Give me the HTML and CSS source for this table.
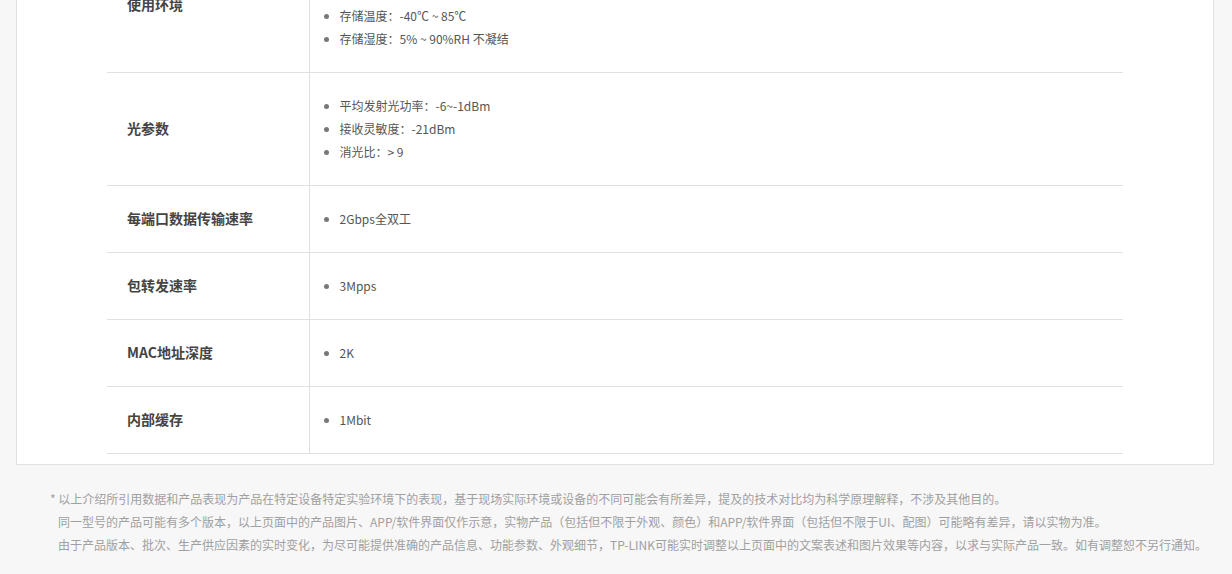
FILE: index.html
```html
<!DOCTYPE html>
<html lang="zh">
<head>
  <meta charset="UTF-8" />
  <title>产品规格参数</title>
  <link rel="stylesheet" href="styles.css">
</head>
<body>
  <div class="spec-card">
    <table class="spec-table">
      <tr>
        <td class="spec-name">使用环境</td>
        <td class="spec-value">
          <ul>
            <li>工作温度：0℃ ~ 40℃</li>
            <li>工作湿度：10% ~ 90%RH 不凝结</li>
            <li>存储温度：-40℃ ~ 85℃</li>
            <li>存储湿度：5% ~ 90%RH 不凝结</li>
          </ul>
        </td>
      </tr>
      <tr>
        <td class="spec-name">光参数</td>
        <td class="spec-value">
          <ul>
            <li>平均发射光功率：-6~-1dBm</li>
            <li>接收灵敏度：-21dBm</li>
            <li>消光比：&gt; 9</li>
          </ul>
        </td>
      </tr>
      <tr>
        <td class="spec-name">每端口数据传输速率</td>
        <td class="spec-value"><ul><li>2Gbps全双工</li></ul></td>
      </tr>
      <tr>
        <td class="spec-name">包转发速率</td>
        <td class="spec-value"><ul><li>3Mpps</li></ul></td>
      </tr>
      <tr>
        <td class="spec-name">MAC地址深度</td>
        <td class="spec-value"><ul><li>2K</li></ul></td>
      </tr>
      <tr>
        <td class="spec-name">内部缓存</td>
        <td class="spec-value"><ul><li>1Mbit</li></ul></td>
      </tr>
    </table>
  </div>

  <div class="notes">
    <p class="first">* 以上介绍所引用数据和产品表现为产品在特定设备特定实验环境下的表现，基于现场实际环境或设备的不同可能会有所差异，提及的技术对比均为科学原理解释，不涉及其他目的。</p>
    <p>同一型号的产品可能有多个版本，以上页面中的产品图片、APP/软件界面仅作示意，实物产品（包括但不限于外观、颜色）和APP/软件界面（包括但不限于UI、配图）可能略有差异，请以实物为准。</p>
    <p>由于产品版本、批次、生产供应因素的实时变化，为尽可能提供准确的产品信息、功能参数、外观细节，TP-LINK可能实时调整以上页面中的文案表述和图片效果等内容，以求与实际产品一致。如有调整恕不另行通知。</p>
  </div>
</body>
</html>
```

FILE: styles.css
```css
/* 重置默认边距 */
* {
  margin: 0;
  padding: 0;
  box-sizing: border-box;
}

body {
  font-family: "Microsoft YaHei", "Noto Sans CJK SC", sans-serif;
  background-color: #f7f7f7;
  color: #333;
}

/* 规格卡片，顶部已滚出视口 */
.spec-card {
  width: 1198px;
  margin: -65px 0 0 16px;
  padding-bottom: 10px;
  background-color: #fff;
  border: 1px solid #e1e1e1;
}

.spec-table {
  width: 1016px;
  margin: 0 auto;
  border-collapse: collapse;
}

.spec-table td {
  border-top: 1px solid #e0e0e0;
  border-bottom: 1px solid #e0e0e0;
  vertical-align: middle;
}

.spec-name {
  width: 202px;
  padding: 0 20px 2px;
  border-right: 1px solid #e0e0e0;
  font-size: 14px;
  font-weight: bold;
  color: #444;
}

.spec-value {
  padding: 21px 20px 22px 30px;
  font-size: 12px;
  line-height: 23px;
  color: #555;
}

.spec-value ul {
  list-style: disc;
}

.spec-value li::marker {
  color: #777;
}

/* 底部说明 */
.notes {
  margin-top: 22px;
  padding-left: 58px;
  font-size: 12px;
  line-height: 23px;
  color: #a0a0a0;
}

.notes .first {
  text-indent: -8px;
}
```
